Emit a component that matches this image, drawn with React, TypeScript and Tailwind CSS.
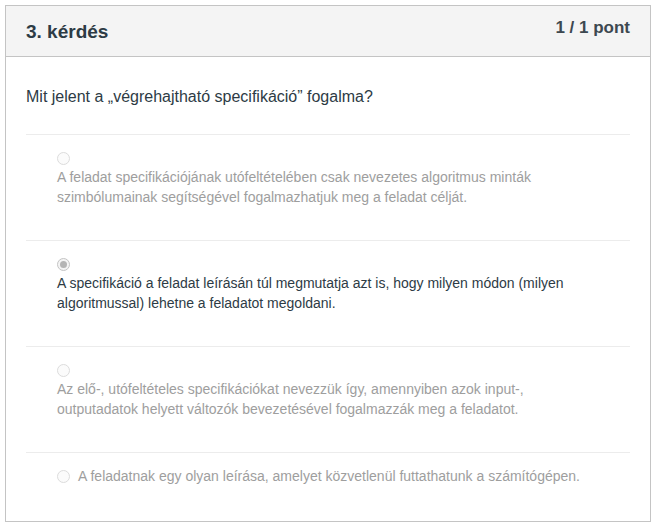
import React from "react";

type Answer = {
  text: string;
  selected?: boolean;
  inline?: boolean;
};

const answers: Answer[] = [
  {
    text: "A feladat specifikációjának utófeltételében csak nevezetes algoritmus minták szimbólumainak segítségével fogalmazhatjuk meg a feladat célját.",
  },
  {
    text: "A specifikáció a feladat leírásán túl megmutatja azt is, hogy milyen módon (milyen algoritmussal) lehetne a feladatot megoldani.",
    selected: true,
  },
  {
    text: "Az elő-, utófeltételes specifikációkat nevezzük így, amennyiben azok input-, outputadatok helyett változók bevezetésével fogalmazzák meg a feladatot.",
  },
  {
    text: "A feladatnak egy olyan leírása, amelyet közvetlenül futtathatunk a számítógépen.",
    inline: true,
  },
];

const Radio = ({ checked }: { checked?: boolean }) => (
  <span
    className={
      checked
        ? "flex h-[13px] w-[13px] shrink-0 items-center justify-center rounded-full border border-[#c4c4c4] bg-[#f4f4f4]"
        : "block h-[13px] w-[13px] shrink-0 rounded-full border border-[#dcdcdc] bg-[#fbfbfb]"
    }
  >
    {checked && <span className="block h-[7px] w-[7px] rounded-full bg-[#b4b4b4]" />}
  </span>
);

const App = () => {
  return (
    <div className="min-h-[531px] w-[656px] bg-white pl-[5px] pt-[5px] font-['Liberation_Sans',Arial,sans-serif]">
      <div className="w-[646px] border border-[#c4c4c4]">
        <div className="flex h-[51px] items-start justify-between border-b border-[#c4c4c4] bg-[#f4f4f4] px-5">
          <h2 className="pt-[14px] text-[19px] font-bold leading-[24px] text-[#2d3b45]">3. kérdés</h2>
          <span className="pt-[12px] text-[17px] font-bold leading-[20px] text-[#3d4850]">1 / 1 pont</span>
        </div>
        <div className="px-5">
          <p className="pt-[30px] pb-[27px] text-[16px] leading-[20px] text-[#2d3b45]">
            Mit jelent a „végrehajtható specifikáció” fogalma?
          </p>
          {answers.map((a, i) =>
            a.inline ? (
              <div key={i} className="border-t border-[#ececec] pt-[13px] pb-[35px]">
                <div className="flex items-center gap-[8px] pl-[31px] text-[14px] leading-[20px] text-[#9e9e9e]">
                  <Radio checked={a.selected} />
                  <span>{a.text}</span>
                </div>
              </div>
            ) : (
              <div key={i} className="border-t border-[#ececec] pt-[17px] pb-[33px] pl-[31px]">
                <Radio checked={a.selected} />
                <p
                  className={
                    "mt-[2px] pr-[24px] text-[14px] leading-[20px] " +
                    (a.selected ? "text-[#2d3b45]" : "text-[#9e9e9e]")
                  }
                >
                  {a.text}
                </p>
              </div>
            )
          )}
        </div>
      </div>
    </div>
  );
};

export default App;
